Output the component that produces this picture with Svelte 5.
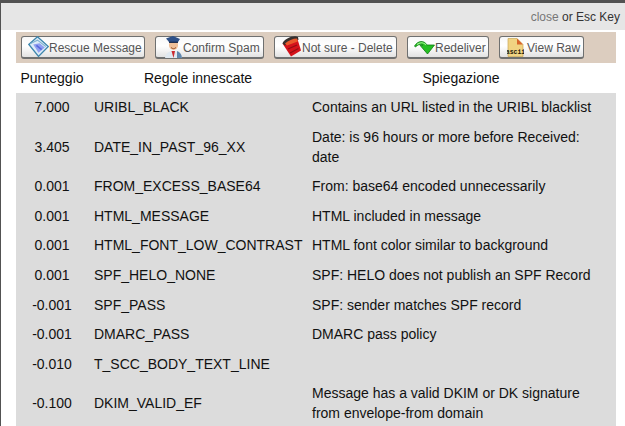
<script lang="ts">
  const rows = [
    { score: '7.000', rule: 'URIBL_BLACK', text: 'Contains an URL listed in the URIBL blacklist' },
    { score: '3.405', rule: 'DATE_IN_PAST_96_XX', text: 'Date: is 96 hours or more before Received: date' },
    { score: '0.001', rule: 'FROM_EXCESS_BASE64', text: 'From: base64 encoded unnecessarily' },
    { score: '0.001', rule: 'HTML_MESSAGE', text: 'HTML included in message' },
    { score: '0.001', rule: 'HTML_FONT_LOW_CONTRAST', text: 'HTML font color similar to background' },
    { score: '0.001', rule: 'SPF_HELO_NONE', text: 'SPF: HELO does not publish an SPF Record' },
    { score: '-0.001', rule: 'SPF_PASS', text: 'SPF: sender matches SPF record' },
    { score: '-0.001', rule: 'DMARC_PASS', text: 'DMARC pass policy' },
    { score: '-0.010', rule: 'T_SCC_BODY_TEXT_LINE', text: '' },
    { score: '-0.100', rule: 'DKIM_VALID_EF', text: 'Message has a valid DKIM or DK signature from envelope-from domain' }
  ];
</script>

<div class="dialog">
  <div class="topbar">
    <span class="close">close</span> or Esc Key
  </div>

  <div class="toolbar">
    <button class="btn rescue">
      <svg width="21" height="21" viewBox="0 0 20 20">
        <path d="M9 .8 L19.4 10 L10 19.4 L.8 8 Z" fill="#dcebf7" stroke="#3d86ad" stroke-width="1.3" />
        <path d="M5 8 L11 7 L16 11 L10 16 Z" fill="#8f9ff0" />
        <path d="M8 9 L13 13" stroke="#5a68dc" stroke-width="1.6" />
        <path d="M2 7.5 L9 4 L17 10" fill="none" stroke="#7fb2d0" stroke-width="1" />
      </svg>
      <span>Rescue Message</span>
    </button>
    <button class="btn confirm">
      <svg width="17" height="22" viewBox="0 0 17 22">
        <path d="M0 22 C1 17 4 15 8 15 C13 15 16 17 17 22 Z" fill="#dfe8f0" />
        <path d="M12 15 C15 16 16.5 18 17 22 L12 22 Z" fill="#5f86ad" />
        <path d="M6.5 15 L8.5 22 L10 15 Z" fill="#cc2a30" />
        <ellipse cx="8.5" cy="9" rx="4.6" ry="5" fill="#efc09a" />
        <path d="M1 2.5 L8 0 L15 3 L13 6 L4 6 Z" fill="#2f5189" />
        <path d="M4 6.3 L13 6.3" stroke="#17294d" stroke-width="1.3" />
        <path d="M6 11.5 C7.5 13 9.5 13 11 11.5" fill="none" stroke="#9c5228" stroke-width="1" />
      </svg>
      <span>Confirm Spam</span>
    </button>
    <button class="btn del">
      <svg width="20" height="21" viewBox="0 0 20 21">
        <path d="M.5 7.5 L15 1.5 L19 14.5 L9 20.5 Z" fill="#d5121b" />
        <path d="M.5 7.5 C2 3 12 -1.5 16 1 L16.5 4 C12 3 6 5.5 3 9.5 Z" fill="#37302e" />
        <path d="M3 7.5 C6 4.5 11 2.5 15 2.5 L15.7 5.5 L5 9.5 Z" fill="#e9582c" />
        <path d="M6 13 L15 9 M8 17 L16.5 12.5" stroke="#920d13" stroke-width="1.1" />
      </svg>
      <span>Not sure - Delete</span>
    </button>
    <button class="btn redeliver">
      <svg width="21" height="15" viewBox="0 0 21 15">
        <path d="M.5 6 C4 .5 10 0 13 5 L20.5 5 L13.5 14 L6 5.3 L9 5.3 C7.5 3.8 4.5 4 1.5 7 Z" fill="#25bf22" stroke="#0e7a13" stroke-width="0.8" />
        <path d="M3 4.5 C6 2 10 2 12 5" fill="none" stroke="#a2f292" stroke-width="1.1" />
      </svg>
      <span>Redeliver</span>
    </button>
    <button class="btn raw">
      <svg width="17" height="19" viewBox="0 0 17 19">
        <path d="M1 .5 L10 .5 L16 6.5 L16 18.5 L1 18.5 Z" fill="#f1d382" stroke="#c9a858" stroke-width="0.7" />
        <path d="M10 .5 L16 6.5 L10 6.5 Z" fill="#d8662c" />
        <text x="8.5" y="16" text-anchor="middle" class="ascii">ascii</text>
      </svg>
      <span>View Raw</span>
    </button>
  </div>

  <table>
    <colgroup>
      <col class="c-score" />
      <col class="c-rule" />
      <col />
    </colgroup>
    <thead>
      <tr>
        <th class="score-head">Punteggio</th>
        <th>Regole innescate</th>
        <th>Spiegazione</th>
      </tr>
    </thead>
    <tbody>
      {#each rows as row}
        <tr>
          <td class="score">{row.score}</td>
          <td>{row.rule}</td>
          <td class="expl">{row.text}</td>
        </tr>
      {/each}
    </tbody>
  </table>
</div>

<style>
  :global(body) {
    margin: 0;
    background: #fff;
    overflow: hidden;
  }

  .dialog {
    height: 423px;
    overflow: hidden;
    border-top: 3px solid #525252;
    border-left: 1px solid #525252;
    font-family: "Liberation Sans", Arial, sans-serif;
    font-size: 14px;
    color: #111;
  }

  .topbar {
    height: 27px;
    line-height: 28px;
    background: #e6e6e6;
    text-align: right;
    padding-right: 5px;
    font-size: 12px;
    color: #333;
  }

  .close {
    color: #777;
  }

  .toolbar {
    display: flex;
    align-items: center;
    height: 31px;
    margin: 2px 9px 0 15px;
    padding-left: 5px;
    gap: 10px;
    background: #dccdbf;
  }

  .btn {
    display: flex;
    align-items: center;
    height: 23px;
    padding: 0;
    box-sizing: border-box;
    border: 1px solid #6f7070;
    border-bottom-width: 2px;
    border-radius: 3px;
    background: linear-gradient(#f8f8f8, #fff 45%, #e2e2e2);
    font-family: inherit;
    font-size: 12px;
    color: #555;
    white-space: nowrap;
  }

  .btn svg {
    flex: none;
  }

  .btn span {
    padding-top: 1px;
  }

  .ascii {
    font-family: "Liberation Mono", monospace;
    font-size: 6.5px;
    font-weight: bold;
    fill: #1c1808;
  }

  .rescue { width: 124px; padding-left: 6px; gap: 0; }
  .rescue svg { margin-top: -1px; }
  .confirm { width: 109px; padding-left: 9px; gap: 1px; }
  .confirm svg { margin-top: -1px; }
  .del { width: 123px; padding-left: 7px; gap: 0; }
  .del svg { margin-top: -2px; }
  .redeliver { width: 82px; padding-left: 6px; gap: 0; }
  .raw { width: 85px; padding-left: 7px; gap: 3px; }

  table {
    width: 600px;
    margin-left: 15px;
    table-layout: fixed;
    border-collapse: collapse;
  }

  .c-score { width: 74px; }
  .c-rule { width: 216px; }

  th {
    height: 30.45px;
    padding: 0;
    font-weight: normal;
    text-align: center;
  }

  .score-head {
    padding-right: 2px;
  }

  td {
    padding: 5px 4px;
    line-height: 19.6px;
    background: #dcdcdc;
    vertical-align: middle;
  }

  .expl {
    padding-left: 6px;
    padding-right: 6px;
  }

  .score {
    text-align: center;
    padding-right: 5px;
    padding-left: 3px;
  }
</style>
